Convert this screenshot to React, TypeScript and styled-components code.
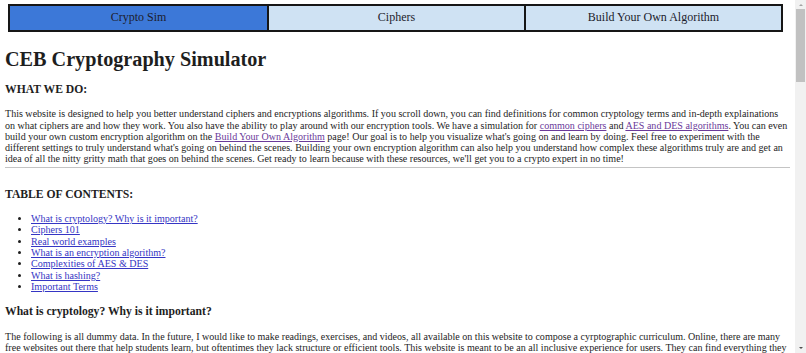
import React from "react";
import styled, { createGlobalStyle } from "styled-components";

const GlobalStyle = createGlobalStyle`
  html, body {
    margin: 0;
    padding: 0;
    background: #ffffff;
    overflow: hidden;
  }
  body {
    padding: 4px 16px 0 5px;
    font-family: "Liberation Serif", "Times New Roman", serif;
    font-size: 10.05px;
    line-height: 11.25px;
    color: #1e1e1e;
  }
`;

type TabPropsType = {
    active?: boolean
}

const tabs = ["Crypto Sim", "Ciphers", "Build Your Own Algorithm"];

const contents = [
    "What is cryptology? Why is it important?",
    "Ciphers 101",
    "Real world examples",
    "What is an encryption algorithm?",
    "Complexities of AES & DES",
    "What is hashing?",
    "Important Terms",
];

export default function App() {
    return (
        <>
            <GlobalStyle/>
            <Nav>
                {tabs.map((t, i) => (
                    <Tab key={t} active={i === 0}>{t}</Tab>
                ))}
            </Nav>
            <Title>CEB Cryptography Simulator</Title>
            <Heading>WHAT WE DO:</Heading>
            <Text>
                This website is designed to help you better understand ciphers and encryptions algorithms. If you
                scroll down, you can find definitions for common cryptology terms and in-depth explainations<br/>
                on what ciphers are and how they work. You also have the ability to play around with our encryption
                tools. We have a simulation for <Visited href="#">common ciphers</Visited> and <Visited href="#">AES
                and DES algorithms</Visited>. You can even<br/>
                build your own custom encryption algorithm on the <Visited href="#">Build Your Own
                Algorithm</Visited> page! Our goal is to help you visualize what's going on and learn by doing. Feel
                free to experiment with the<br/>
                different settings to truly understand what's going on behind the scenes. Building your own
                encryption algorithm can also help you understand how complex these algorithms truly are and get
                an<br/>
                idea of all the nitty gritty math that goes on behind the scenes. Get ready to learn because with
                these resources, we'll get you to a crypto expert in no time!
            </Text>
            <Rule/>
            <Heading>TABLE OF CONTENTS:</Heading>
            <Contents>
                {contents.map(c => (
                    <li key={c}><Link href="#">{c}</Link></li>
                ))}
            </Contents>
            <Heading>What is cryptology? Why is it important?</Heading>
            <Text>
                The following is all dummy data. In the future, I would like to make readings, exercises, and videos,
                all available on this website to compose a cyrptographic curriculum. Online, there are many<br/>
                free websites out there that help students learn, but oftentimes they lack structure or efficient
                tools. This website is meant to be an all inclusive experience for users. They can find everything
                they<br/>
                need to learn about cryptography in one place, from the basics of ciphers to the inner workings of
                modern encryption standards.
            </Text>
            <Scrollbar>
                <Arrow/>
                <Thumb/>
                <Arrow down/>
            </Scrollbar>
        </>
    );
}

const Nav = styled.nav`
  display: grid;
  grid-template-columns: repeat(3, 1fr);
  margin: 0 7px 0 3px;
  border: 2px solid #161616;
`

const Tab = styled.div<TabPropsType>`
  height: 24px;
  display: flex;
  align-items: center;
  justify-content: center;
  background-color: ${props => props.active ? "#3c78d8" : "#cfe2f3"};
  color: #1c1c2c;
  font-size: 12px;
  & + & {
    border-left: 2px solid #161616;
  }
`

const Title = styled.h1`
  font-size: 20.2px;
  line-height: 23px;
  margin: 16px 0 10px;
`

const Heading = styled.h3`
  font-size: 11.65px;
  line-height: 13.4px;
  margin: 12px 0;
`

const Text = styled.p`
  margin: 12px 0 2px;
  white-space: nowrap;
`

const Rule = styled.hr`
  margin: 0 0 20px;
  border: none;
  border-top: 1px solid #c4c4c4;
`

const Contents = styled.ul`
  margin: 12px 0 13px;
  padding-left: 26px;
  line-height: 11.3px;
`

const Link = styled.a`
  color: #3535c4;
`

const Visited = styled.a`
  color: #6a3a9a;
`

const Scrollbar = styled.div`
  position: fixed;
  top: 0;
  right: 0;
  width: 11px;
  height: 100vh;
  background: #f1f1f1;
  display: flex;
  flex-direction: column;
  align-items: center;
`

const Arrow = styled.div<{ down?: boolean }>`
  width: 0;
  height: 0;
  margin: ${props => props.down ? "auto 0 4px" : "4px 0 3px"};
  border-left: 2px solid transparent;
  border-right: 2px solid transparent;
  border-bottom: ${props => props.down ? "none" : "2px solid #a3a3a3"};
  border-top: ${props => props.down ? "2px solid #505050" : "none"};
`

const Thumb = styled.div`
  width: 9px;
  height: 73px;
  background: #c1c1c1;
`
